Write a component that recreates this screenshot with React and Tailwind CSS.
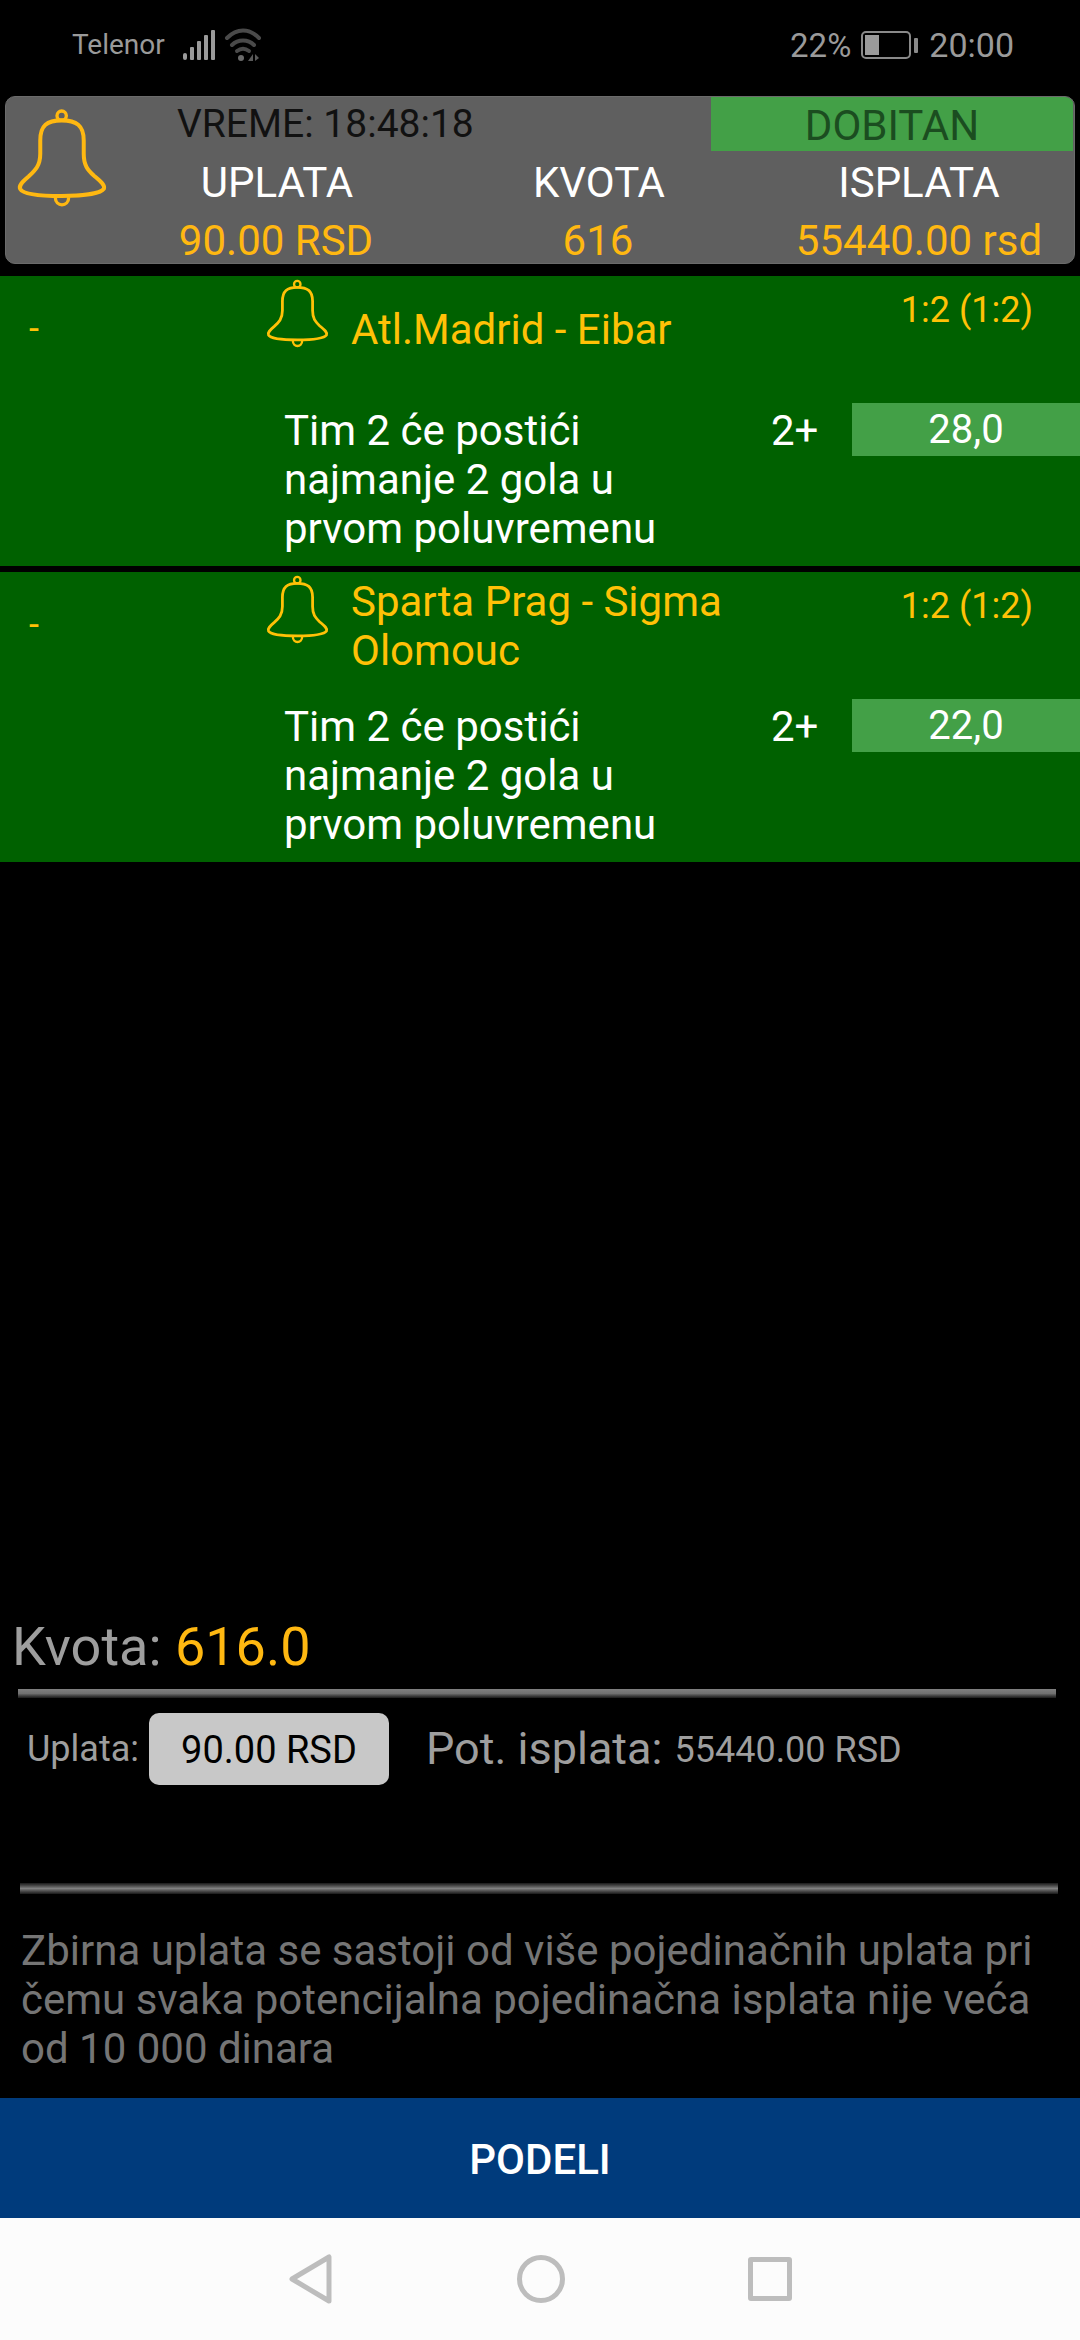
import React from "react";

const font = { fontFamily: "Roboto, sans-serif" };

function Bell({ className }) {
  return (
    <svg className={className} viewBox="45 50 280 305" fill="none" stroke="currentColor" strokeWidth="12">
      <circle cx="184" cy="76" r="14" strokeWidth="10" />
      <path d="M184 90C140 90 120 105 120 150L120 190C120 225 105 240 85 258C65 275 55 285 60 295C70 312 130 316 184 316C240 316 300 310 310 295C315 283 300 272 280 255C262 238 250 225 250 190L250 150C250 105 228 90 184 90Z" />
      <path d="M165 320C165 350 205 350 205 320" strokeWidth="10" />
    </svg>
  );
}

function StatusBar() {
  return (
    <div className="h-[96px] flex items-center text-[#9a9a9a] relative">
      <span className="ml-[72px] text-[28px] leading-none mt-[-6px]">Telenor</span>
      <svg className="ml-[18px] mt-[-6px]" width="80" height="34" viewBox="0 0 80 34">
        <g fill="#9a9a9a">
          <rect x="0" y="25" width="4" height="7" rx="2" />
          <rect x="7" y="19" width="4" height="13" rx="1" />
          <rect x="14" y="13" width="4" height="19" rx="1" />
          <rect x="21" y="7" width="4" height="25" rx="1" />
          <rect x="28" y="2" width="4" height="30" rx="1" />
        </g>
        <g fill="none" stroke="#4a4a4a" strokeWidth="4" strokeLinecap="round">
          <path d="M44 10C54 0 66 0 76 10" />
          <path d="M49 17C55 11 65 11 71 17" />
          <path d="M54 23C58 20 62 20 66 23" />
        </g>
        <circle cx="58" cy="30" r="3" fill="#6a6a6a" />
        <path d="M70 26L70 33L65 33ZM72 26L76 30L72 33Z" fill="#5a5a5a" />
      </svg>
      <div className="ml-auto mr-[66px] flex items-center mt-[-6px]">
        <span className="text-[33px] leading-none">22%</span>
        <div className="ml-[10px] w-[50px] h-[28px] border-2 border-[#8a8a8a] rounded-[5px] p-[2px]">
          <div className="w-[14px] h-full bg-[#9a9a9a]" />
        </div>
        <div className="ml-[3px] w-[4px] h-[15px] bg-[#8a8a8a] rounded-[1px]" />
        <span className="ml-[11px] text-[34px] leading-none">20:00</span>
      </div>
    </div>
  );
}

function TicketHeader() {
  return (
    <div className="mx-[5px] h-[168px] bg-[#5f5f5f] rounded-[10px] border border-[#6b6b6b] flex relative overflow-hidden">
      <Bell className="absolute left-[9px] top-[10px] w-[94px] h-[102px] text-[#ffb811]" />
      <div className="flex-1 flex flex-col pl-[105px]">
        <div className="h-[54px] flex items-center">
          <span className="ml-[66px] text-[39px] text-[#111] leading-none">VREME: 18:48:18</span>
          <div className="ml-auto mr-[1px] w-[362px] h-full bg-[#43a047] text-[#1b4d20] text-[42px] flex items-center justify-center pt-[2px]">
            DOBITAN
          </div>
        </div>
        <div className="flex h-[60px] pt-[5px] items-center text-white text-[42px] leading-none text-center">
          <span className="w-[332px]">UPLATA</span>
          <span className="w-[312px]">KVOTA</span>
          <span className="w-[319px] pl-[9px]">ISPLATA</span>
        </div>
        <div className="flex h-[54px] pt-[10px] items-center text-[#ffb811] text-[42px] leading-none text-center whitespace-nowrap">
          <span className="w-[330px]">90.00 RSD</span>
          <span className="w-[314px]">616</span>
          <span className="w-[319px] pl-[9px]">55440.00 rsd</span>
        </div>
      </div>
    </div>
  );
}

function MatchRow({ title, odd }) {
  return (
    <div className="h-[290px] bg-[#006100]">
      <div className="h-[106px] flex items-center">
        <span className="w-[265px] pl-[29px] text-[36px] text-[#ffc107] shrink-0">-</span>
        <Bell className="w-[65px] h-[71px] text-[#ffc107] shrink-0 self-start mt-[2px]" />
        <div className="ml-[21px] w-[400px] pt-[1px] text-[42px] leading-[49px] text-[#ffc107]">{title}</div>
        <span className="ml-auto mr-[47px] self-start mt-[12px] text-[36px] leading-[44px] text-[#ffc107] whitespace-nowrap">
          1:2 (1:2)
        </span>
      </div>
      <div className="mt-[21px] flex">
        <div className="ml-[284px] w-[440px] text-[42px] leading-[49px] text-white pt-[3px]">
          Tim 2 će postići najmanje 2 gola u prvom poluvremenu
        </div>
        <span className="ml-[47px] pt-[1px] text-[42px] leading-[53px] text-white">2+</span>
        <div className="ml-auto w-[228px] h-[53px] pt-[1px] bg-[#43a047] text-white text-[40px] flex items-center justify-center">
          {odd}
        </div>
      </div>
    </div>
  );
}

function NavBar() {
  return (
    <div className="h-[122px] bg-[#fcfcfc] flex items-center justify-center">
      <svg width="44" height="50" viewBox="0 0 44 50" fill="none" stroke="#bdbdbd" strokeWidth="5" strokeLinejoin="round">
        <path d="M40 3L40 47L3 25Z" />
      </svg>
      <div className="ml-[184px] w-[48px] h-[48px] rounded-full border-[5px] border-[#bdbdbd]" />
      <div className="ml-[183px] w-[44px] h-[44px] rounded-[3px] border-[5px] border-[#bdbdbd]" />
    </div>
  );
}

export default function App() {
  return (
    <div className="w-[1080px] h-[2340px] bg-black flex flex-col overflow-hidden" style={font}>
      <StatusBar />
      <TicketHeader />
      <div className="mt-[12px] flex flex-col gap-[6px]">
        <MatchRow title="Atl.Madrid - Eibar" odd="28,0" />
        <MatchRow title="Sparta Prag - Sigma Olomouc" odd="22,0" />
      </div>

      <div className="flex-1" />

      <div className="pl-[12px] pt-[2px] h-[64px] flex items-center text-[54px] leading-none text-[#9e9e9e]">
        Kvota:&nbsp;<span className="text-[#ffb811]">616.0</span>
      </div>
      <div className="mt-[11px] mx-[18px] w-[1038px] h-[9px] bg-linear-to-b from-[#808080] via-[#707070] to-[#1a1a1a]" />
      <div className="mt-[15px] flex items-center h-[72px]">
        <span className="ml-[27px] text-[36px] text-[#9e9e9e]">Uplata:</span>
        <div className="ml-[10px] w-[240px] h-[72px] pt-[2px] bg-[#c8c8c8] rounded-[10px] flex items-center justify-center text-[38px] text-black">
          90.00 RSD
        </div>
        <span className="ml-[37px] text-[45px] text-[#9e9e9e]">Pot. isplata:</span>
        <span className="ml-[12px] pt-[1px] text-[36px] text-[#9e9e9e]">55440.00 RSD</span>
      </div>
      <div className="mt-[98px] ml-[20px] w-[1038px] h-[11px] bg-linear-to-b from-[#1a1a1a] via-[#808080] to-[#1a1a1a]" />
      <div className="mt-[31px] px-[21px] pt-[1px] h-[173px] text-[42px] leading-[49px] text-[#757575]">
        Zbirna uplata se sastoji od više pojedinačnih uplata pri čemu svaka potencijalna pojedinačna isplata nije veća od 10 000 dinara
      </div>
      <div className="h-[120px] pt-[3px] bg-[#003b7c] flex items-center justify-center text-white text-[42px] font-medium">
        PODELI
      </div>
      <NavBar />
    </div>
  );
}
